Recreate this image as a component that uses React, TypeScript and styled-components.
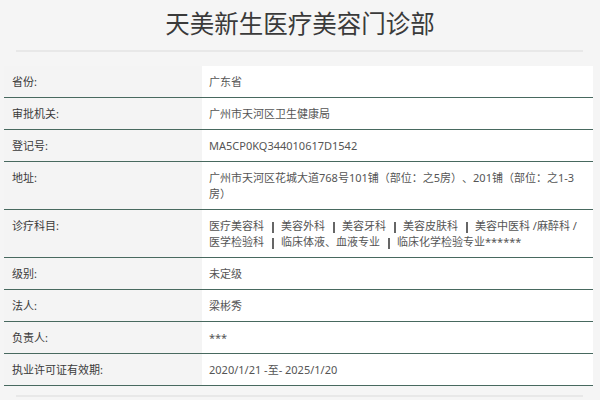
import React from "react";
import styled, { createGlobalStyle } from "styled-components";

const Global = createGlobalStyle`
  html, body { margin: 0; padding: 0; background: #f5f5f5; }
  body { font-family: "Noto Sans", "Noto Sans CJK SC", sans-serif; }
`;

const Page = styled.div`
  width: 600px;
  height: 400px;
  overflow: hidden;
  background: #f5f5f5;
  display: flex;
  flex-direction: column;
  text-spacing-trim: space-all;
`;

const Title = styled.h1`
  margin: 10px 0 0;
  font-family: "Noto Sans CJK SC", sans-serif;
  font-size: 24.5px;
  line-height: 25px;
  font-weight: 400;
  color: #3a3a3a;
  text-align: center;
`;

const Rule = styled.div`
  margin: 15px 17px 0 16px;
  height: 2px;
  background: #e8e8e8;
`;

const Table = styled.div`
  margin: 14px 7px 0 4px;
  display: flex;
  flex-direction: column;
`;

const Row = styled.div`
  display: grid;
  grid-template-columns: 198px 1fr;
  border-bottom: 1px solid #48695f;
`;

const Label = styled.div`
  padding: 8px 8px 7px;
  font-size: 11px;
  line-height: 16px;
  color: #3a3a3a;
  background: #f4f4f4;
`;

const Value = styled.div`
  padding: 8px 9px 7px 7px;
  font-size: 11px;
  line-height: 16px;
  height: max-content;
  color: #555;
  background: #fff;
`;

const Bar = styled.span`
  display: inline-block;
  width: 2px;
  height: 11px;
  background: #666;
  margin: 0 7px 0 8px;
  vertical-align: middle;
`;

const Footer = styled.div`
  margin: 9px 17px 0 16px;
  height: 2px;
  background: #e8e8e8;
`;

const rows: { label: string; value: React.ReactNode }[] = [
  { label: "省份:", value: "广东省" },
  { label: "审批机关:", value: "广州市天河区卫生健康局" },
  { label: "登记号:", value: "MA5CP0KQ344010617D1542" },
  {
    label: "地址:",
    value: "广州市天河区花城大道768号101铺（部位：之5房）、201铺（部位：之1-3房）",
  },
  {
    label: "诊疗科目:",
    value: (
      <>
        医疗美容科<Bar />美容外科<Bar />美容牙科<Bar />美容皮肤科<Bar />美容中医科 /麻醉科 /
        医学检验科<Bar />临床体液、血液专业<Bar />临床化学检验专业******
      </>
    ),
  },
  { label: "级别:", value: "未定级" },
  { label: "法人:", value: "梁彬秀" },
  { label: "负责人:", value: "***" },
  { label: "执业许可证有效期:", value: "2020/1/21 -至- 2025/1/20" },
];

export default function App() {
  return (
    <Page>
      <Global />
      <Title>天美新生医疗美容门诊部</Title>
      <Rule />
      <Table>
        {rows.map((r) => (
          <Row key={r.label}>
            <Label>{r.label}</Label>
            <Value>{r.value}</Value>
          </Row>
        ))}
      </Table>
      <Footer />
    </Page>
  );
}
